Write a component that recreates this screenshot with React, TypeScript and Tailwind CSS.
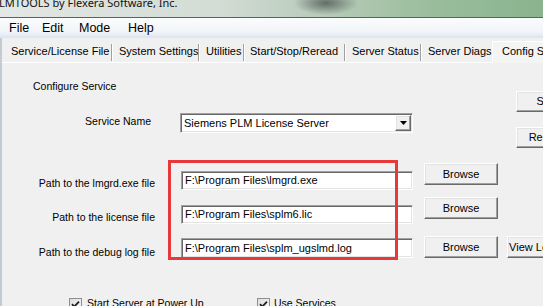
import React from 'react';

const raised =
  'flex flex-none items-center justify-center bg-[#f0f0f0] border border-t-white border-l-white border-r-[#696969] border-b-[#696969] shadow-[inset_-1px_-1px_0_#a0a0a0,inset_1px_1px_0_#e3e3e3] text-[11px] leading-[13px] whitespace-nowrap';

const sunken =
  'flex flex-none items-center bg-white border border-t-[#a0a0a0] border-l-[#a0a0a0] border-r-white border-b-white shadow-[inset_1px_1px_0_#696969,inset_-1px_-1px_0_#e3e3e3] text-[11px] leading-[13px] whitespace-nowrap overflow-hidden';

const TABS = [
  { label: 'Service/License File', w: 'w-[111px]', pl: 'pl-[9px]' },
  { label: 'System Settings', w: 'w-[86px]', pl: 'pl-[6px]' },
  { label: 'Utilities', w: 'w-[46px]', pl: 'pl-[7px]' },
  { label: 'Start/Stop/Reread', w: 'w-[101px]', pl: 'pl-[5px]' },
  { label: 'Server Status', w: 'w-[76px]', pl: 'pl-[6px]' },
  { label: 'Server Diags', w: 'w-[70px]', pl: 'pl-[6px]' },
];

const PATHS = [
  { label: 'Path to the lmgrd.exe file', value: 'F:\\Program Files\\lmgrd.exe', row: 'mt-[15px]', lab: 'mt-[14px]', inp: 'mt-[8px] h-[19px]' },
  { label: 'Path to the license file', value: 'F:\\Program Files\\splm6.lic', row: 'mt-[7px]', lab: 'mt-[14px]', inp: 'mt-[8px] h-[19px]' },
  { label: 'Path to the debug log file', value: 'F:\\Program Files\\splm_ugslmd.log', row: 'mt-[12px]', lab: 'mt-[10px]', inp: 'mt-[2px] h-[20px]', log: true },
];

const CheckBox = () => (
  <div className="flex-none w-[13px] h-[13px] mt-[1px] border border-[#8e8f8f] bg-[linear-gradient(135deg,#dcdcdc,#fbfbfb)] flex items-center justify-center">
    <svg width="9" height="9" viewBox="0 0 9 9">
      <path d="M1 4.2 L3.3 6.6 L8 1.6" fill="none" stroke="#1f1f1f" strokeWidth="1.8" />
    </svg>
  </div>
);

export default function App() {
  return (
    <div className="relative w-[543px] h-[306px] overflow-hidden bg-[#f0f0f0] text-black font-['Liberation_Sans',Arial,sans-serif]">
      {/* glass title bar */}
      <div className="h-[17px] overflow-hidden bg-[radial-gradient(32px_12px_at_326px_3px,#626c66,transparent),linear-gradient(90deg,#e3e7e5,#d3dcd5_40%,#b6cbb8_60%,#9abd9c_80%,#8ab48d)]">
        <div className="-mt-[4px] -ml-[1px] text-[11px] leading-[14px] font-['Noto_Sans',sans-serif] text-[#111] whitespace-nowrap">
          LMTOOLS by Flexera Software, Inc.
        </div>
      </div>
      <div className="h-px bg-[#55636c]" />

      {/* menu bar */}
      <div className="h-[20px] flex text-[12.5px] leading-[20px] bg-[linear-gradient(#fbfcfd,#f1f4f8_70%,#dae4f1)]">
        <span className="ml-[9px] w-[33px]">File</span>
        <span className="w-[37px]">Edit</span>
        <span className="w-[49px]">Mode</span>
        <span>Help</span>
      </div>

      <div className="border-l-2 border-[#c3ccd5] h-[268px]">
        {/* tab strip */}
        <div className="h-[25px] flex text-[11px] leading-[13px]">
          {TABS.map((t) => (
            <div key={t.label} className={`flex flex-none h-[25px] border-b border-white ${t.w}`}>
              <div className={`flex-1 pt-[7px] whitespace-nowrap ${t.pl}`}>{t.label}</div>
              <div className="flex-none w-[2px] h-[17px] mt-[6px] border-l border-[#a0a0a0] border-r border-r-white" />
            </div>
          ))}
          <div className="flex-none mt-[3px] h-[22px] pl-[9px] pt-[3px] pr-4 border-l border-t border-white bg-[#f4f4f4] whitespace-nowrap">
            Config Services
          </div>
        </div>

        {/* top section */}
        <div className="flex items-start">
          <div className="flex-none w-[514px] pt-[17px]">
            <div className="pl-[31px] text-[10.5px] leading-[12px]">Configure Service</div>
            <div className="flex items-start mt-[21px]">
              <div className="flex-none w-[149px] mt-[2px] text-right text-[10.5px] leading-[12px]">Service Name</div>
              <div className={`${sunken} ml-[29px] w-[233px] h-[20px]`}>
                <span className="flex-1 pl-[3px]">Siemens PLM License Server</span>
                <div className={`${raised} w-[16px] h-[16px] mr-[1px]`}>
                  <svg width="7" height="4" viewBox="0 0 7 4">
                    <path d="M0 0 H7 L3.5 4 Z" fill="#000" />
                  </svg>
                </div>
              </div>
            </div>
          </div>
          <div className="flex-none pt-[28px]">
            <div className={`${raised} w-[106px] h-[21px]`}>Save Service</div>
            <div className={`${raised} w-[106px] h-[21px] mt-[15px]`}>Remove Service</div>
          </div>
        </div>

        {/* path rows */}
        {PATHS.map((p) => (
          <div key={p.label} className={`flex items-start ${p.row}`}>
            <div className={`flex-none w-[153px] text-right text-[10.5px] leading-[12px] whitespace-nowrap ${p.lab}`}>{p.label}</div>
            <div className={`${sunken} ml-[26px] w-[232px] pl-[3px] ${p.inp}`}>{p.value}</div>
            <div className={`${raised} ml-[11px] w-[74px] h-[22px]`}>Browse</div>
            {p.log && <div className={`${raised} ml-[9px] w-[70px] h-[22px]`}>View Log File</div>}
          </div>
        ))}

        {/* options */}
        <div className="flex items-start mt-[39px] text-[10.5px] leading-[12px]">
          <div className="ml-[67px]">
            <CheckBox />
          </div>
          <div className="flex-none w-[175px] pl-[5px] whitespace-nowrap">Start Server at Power Up</div>
          <CheckBox />
          <div className="pl-[4px] whitespace-nowrap">Use Services</div>
        </div>
      </div>

      {/* annotation box drawn over the screenshot */}
      <div className="absolute left-[168px] top-[160px] w-[230px] h-[100px] border-[3px] border-[#e5393b]" />
    </div>
  );
}
